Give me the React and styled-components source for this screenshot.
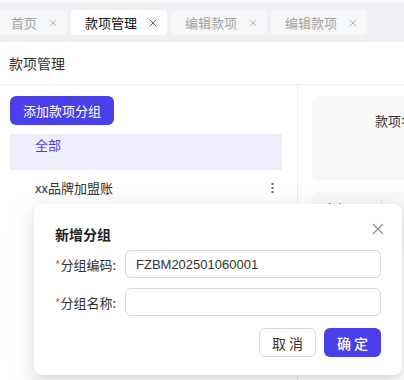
import styled, { createGlobalStyle } from "styled-components";

const GlobalStyle = createGlobalStyle`
  body {
    margin: 0;
    background: #fff;
    font-family: "Noto Sans CJK SC", "Noto Sans", sans-serif;
    color: #333;
  }
  * { box-sizing: border-box; }
`;

const Page = styled.div`
  position: relative;
  width: 404px;
  height: 380px;
  overflow: hidden;
  display: flex;
  flex-direction: column;
`;

const TabBar = styled.div`
  display: flex;
  gap: 4px;
  height: 42px;
  padding: 7px 0 0 0;
  margin-left: -3px;
  background: #eff0f3;
  border-top: 3px solid #f7f7f9;
`;

const Tab = styled.div`
  display: flex;
  align-items: center;
  gap: 12px;
  height: 25px;
  padding: 0 10px 0 14px;
  border-radius: 4px;
  background: ${(p) => (p.$active ? "#fff" : "#f6f7f9")};
  color: ${(p) => (p.$active ? "#111" : "#a3a3a3")};
  font-size: 13px;
  white-space: nowrap;
  flex-shrink: 0;
`;

const TabClose = styled.span`
  display: flex;
  width: 8px;
  height: 8px;
  color: ${(p) => (p.$active ? "#333" : "#aaa")};
`;

const Header = styled.div`
  height: 43px;
  display: flex;
  align-items: center;
  padding-left: 9px;
  font-size: 14px;
  color: #333;
  border-bottom: 1px solid #eeeeee;
`;

const Body = styled.div`
  flex: 1;
  display: flex;
  min-width: 0;
`;

const LeftPanel = styled.div`
  width: 298px;
  flex-shrink: 0;
  padding: 11px 15px 0 10px;
  border-right: 1px solid #eeeeee;
`;

const PrimaryButton = styled.button`
  height: 29px;
  padding: 0 13px;
  border: none;
  border-radius: 6px;
  background: #4a40e9;
  color: #fff;
  font-family: inherit;
  font-size: 13px;
  white-space: nowrap;
`;

const GroupList = styled.div`
  display: flex;
  flex-direction: column;
  margin-top: 9px;
`;

const GroupItem = styled.div`
  display: flex;
  align-items: ${(p) => (p.$active ? "flex-start" : "center")};
  justify-content: space-between;
  height: 36px;
  padding: 0 8px 0 25px;
  line-height: 22px;
  font-size: 13px;
  background: ${(p) => (p.$active ? "#f0eefc" : "transparent")};
  color: ${(p) => (p.$active ? "#4a40e9" : "#333")};
`;

const RightPanel = styled.div`
  flex: 1;
  min-width: 0;
  padding: 11px 0 0 14px;
  display: flex;
  flex-direction: column;
  gap: 12px;
`;

const Card = styled.div`
  display: flex;
  height: ${(p) => p.$h}px;
  background: #f8f8f8;
  border-radius: 6px 0 0 6px;
  padding: ${(p) => p.$pt}px 0 0 ${(p) => p.$pl}px;
  font-size: 13px;
  line-height: 22px;
  color: #333;
  white-space: nowrap;
  overflow: hidden;
`;

const CardCell = styled.div`
  width: 70px;
  border-right: 1px solid #e6e6e6;
  padding-left: 11px;
`;

const Modal = styled.div`
  position: absolute;
  left: 34px;
  top: 204px;
  width: 368px;
  height: 171px;
  padding: 19px 21px 0 21px;
  background: #fff;
  border-radius: 8px;
  box-shadow: 0 6px 16px 0 rgba(0, 0, 0, 0.08),
    0 3px 6px -4px rgba(0, 0, 0, 0.12), 0 9px 28px 8px rgba(0, 0, 0, 0.05);
`;

const ModalTitle = styled.div`
  font-size: 14px;
  font-weight: 700;
  line-height: 22px;
  color: #222;
`;

const CloseBtn = styled.span`
  position: absolute;
  right: 18px;
  top: 19px;
  width: 12px;
  height: 12px;
  display: flex;
  color: #8c8c8c;
`;

const Form = styled.div`
  display: flex;
  flex-direction: column;
  gap: 10px;
  margin-top: 5px;
`;

const FormRow = styled.div`
  display: flex;
  align-items: center;
`;

const Label = styled.label`
  width: 70px;
  font-size: 13px;
  color: #333;
  white-space: nowrap;
  &::before {
    content: "*";
    color: #ff4d4f;
    font-size: 12px;
  }
`;

const Input = styled.input`
  width: 256px;
  height: 28px;
  padding: 0 10px;
  border: 1px solid #d9d9d9;
  border-radius: 6px;
  font-family: "Liberation Sans", "Noto Sans CJK SC", sans-serif;
  font-size: 13px;
  color: #333;
  outline: none;
`;

const Footer = styled.div`
  display: flex;
  justify-content: flex-end;
  gap: 8px;
  margin-top: 12px;
`;

const DefaultButton = styled.button`
  width: 57px;
  height: 29px;
  padding: 0;
  border: 1px solid #d9d9d9;
  border-radius: 6px;
  background: #fff;
  color: #333;
  font-family: inherit;
  font-size: 14px;
  white-space: nowrap;
`;

const OkButton = styled(PrimaryButton)`
  width: 57px;
  padding: 0;
  font-size: 14px;
  font-weight: 500;
`;

const Cross = ({ w = 1.3 }) => (
  <svg viewBox="0 0 12 12" width="100%" height="100%">
    <path d="M1 1L11 11M11 1L1 11" stroke="currentColor" strokeWidth={w} fill="none" />
  </svg>
);

const Dots = () => (
  <svg width="3" height="11" viewBox="0 0 3 11">
    <rect x="0.5" y="0" width="2" height="2" fill="#666" />
    <rect x="0.5" y="4" width="2" height="2" fill="#666" />
    <rect x="0.5" y="8" width="2" height="2" fill="#666" />
  </svg>
);

const tabs = [
  { label: "首页" },
  { label: "款项管理", active: true },
  { label: "编辑款项" },
  { label: "编辑款项" },
];

export default function App() {
  return (
    <>
      <GlobalStyle />
      <Page>
        <TabBar>
          {tabs.map((t, i) => (
            <Tab key={i} $active={t.active}>
              {t.label}
              <TabClose $active={t.active}>
                <Cross w={1.2} />
              </TabClose>
            </Tab>
          ))}
        </TabBar>
        <Header>款项管理</Header>
        <Body>
          <LeftPanel>
            <PrimaryButton>添加款项分组</PrimaryButton>
            <GroupList>
              <GroupItem $active>全部</GroupItem>
              <GroupItem>
                xx品牌加盟账
                <Dots />
              </GroupItem>
            </GroupList>
          </LeftPanel>
          <RightPanel>
            <Card $h={84} $pt={14} $pl={63}>
              款项名称
            </Card>
            <Card $h={60} $pt={6} $pl={0}>
              <CardCell>全部</CardCell>
            </Card>
          </RightPanel>
        </Body>
        <Modal>
          <ModalTitle>新增分组</ModalTitle>
          <CloseBtn>
            <Cross w={1.1} />
          </CloseBtn>
          <Form>
            <FormRow>
              <Label>分组编码:</Label>
              <Input defaultValue="FZBM202501060001" />
            </FormRow>
            <FormRow>
              <Label>分组名称:</Label>
              <Input />
            </FormRow>
          </Form>
          <Footer>
            <DefaultButton>取 消</DefaultButton>
            <OkButton>确 定</OkButton>
          </Footer>
        </Modal>
      </Page>
    </>
  );
}
